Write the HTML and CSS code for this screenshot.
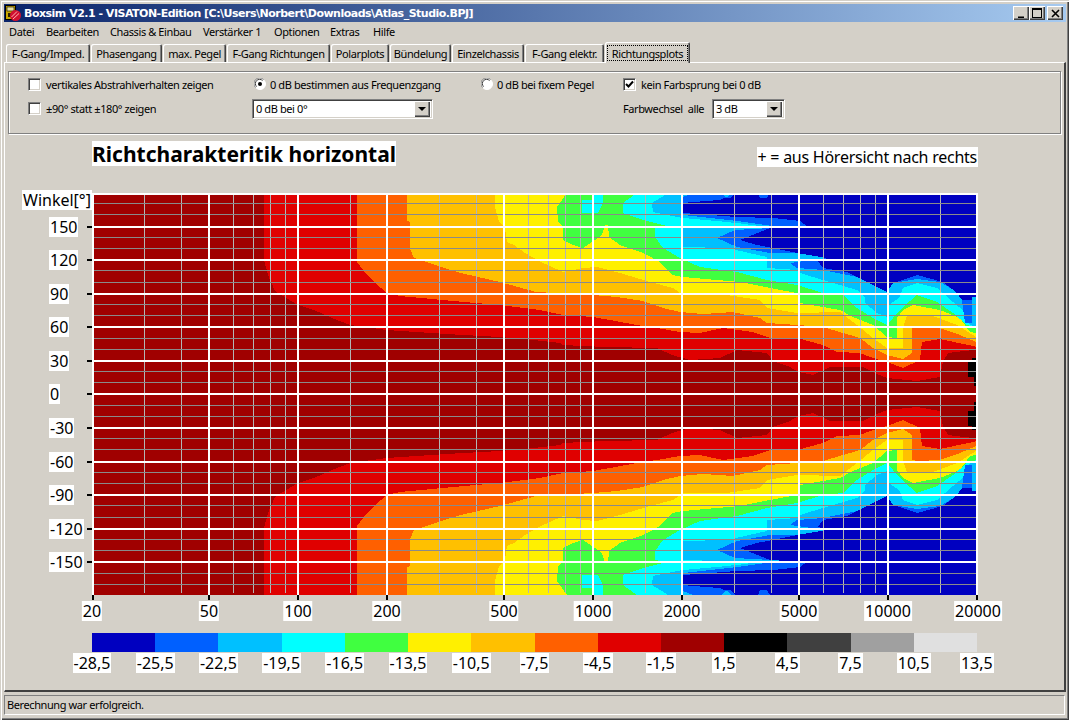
FILE: index.html
```html
<!DOCTYPE html>
<html lang="de">
<head>
<meta charset="utf-8">
<title>Boxsim V2.1</title>
<link rel="stylesheet" href="styles.css">
</head>
<body>
<div class="window">
  <header class="titlebar">
    <svg class="appicon" viewBox="0 0 16 16" width="16" height="16">
      <rect x="0.5" y="0.5" width="10" height="14" fill="#c8a800" stroke="#000"/>
      <rect x="2" y="2" width="7" height="4" fill="#e8e0a0" stroke="#000" stroke-width="0.6"/>
      <rect x="3" y="8" width="3" height="4" fill="#302000"/>
      <circle cx="10.5" cy="10.5" r="5.5" fill="#d01030"/>
      <path d="M6.5 12 12 6.5M8 14 14 8.5" stroke="#ffb0b0" stroke-width="1" fill="none"/>
    </svg>
    <span class="title-text">Boxsim V2.1 - VISATON-Edition [C:\Users\Norbert\Downloads\Atlas_Studio.BPJ]</span>
    <div class="capbtns">
      <span class="capbtn"><svg viewBox="0 0 9 9" width="9" height="9"><path d="M1 7.5h6v1.5H1z"/></svg></span>
      <span class="capbtn capbtn-mid"><svg viewBox="0 0 10 10" width="10" height="10"><path d="M0 0h10v10H0zM1 2v7h8V2z" fill-rule="evenodd"/></svg></span>
      <span class="capbtn capbtn-close"><svg viewBox="0 0 9 9" width="9" height="9"><path d="M1 1l7 7M8 1 1 8" stroke="#000" stroke-width="1.6" fill="none"/></svg></span>
    </div>
  </header>

  <nav class="menubar">
    <span>Datei</span><span>Bearbeiten</span><span>Chassis &amp; Einbau</span><span>Verstärker 1</span><span>Optionen</span><span>Extras</span><span>Hilfe</span>
  </nav>

  <div class="tabs">
    <span class="tab">F-Gang/Imped.</span>
    <span class="tab">Phasengang</span>
    <span class="tab">max. Pegel</span>
    <span class="tab">F-Gang Richtungen</span>
    <span class="tab">Polarplots</span>
    <span class="tab">Bündelung</span>
    <span class="tab">Einzelchassis</span>
    <span class="tab">F-Gang elektr.</span>
    <span class="tab tab-active"><span class="focus">Richtungsplots</span></span>
  </div>

  <main class="page">
    <section class="group">
      <label class="opt"><span class="check"></span>vertikales Abstrahlverhalten zeigen</label>
      <label class="opt"><svg class="radio" viewBox="0 0 12 12" width="12" height="12"><circle cx="6" cy="6" r="5.5" fill="#fff" stroke="#fff"/><path d="M1.6 9.6A5.5 5.5 0 0 1 9.6 1.6" fill="none" stroke="#808080"/><path d="M2.6 8.6A4.2 4.2 0 0 1 8.6 2.6" fill="none" stroke="#404040"/><circle cx="6" cy="6" r="2" fill="#000"/></svg>0 dB bestimmen aus Frequenzgang</label>
      <label class="opt"><svg class="radio" viewBox="0 0 12 12" width="12" height="12"><circle cx="6" cy="6" r="5.5" fill="#fff" stroke="#fff"/><path d="M1.6 9.6A5.5 5.5 0 0 1 9.6 1.6" fill="none" stroke="#808080"/><path d="M2.6 8.6A4.2 4.2 0 0 1 8.6 2.6" fill="none" stroke="#404040"/></svg>0 dB bei fixem Pegel</label>
      <label class="opt"><span class="check"><svg viewBox="0 0 9 9" width="9" height="9"><path d="M1 4l2.5 2.5L8 1.5" fill="none" stroke="#000" stroke-width="2"/></svg></span>kein Farbsprung bei 0 dB</label>

      <label class="opt"><span class="check"></span>±90° statt ±180° zeigen</label>
      <div class="combo combo-wide"><span class="combo-val">0 dB bei 0°</span><span class="combo-btn"><i></i></span></div>
      <span></span>
      <div class="farb"><span class="farb-label">Farbwechsel&nbsp; alle</span><div class="combo combo-small"><span class="combo-val">3 dB</span><span class="combo-btn"><i></i></span></div></div>
    </section>

    <section class="chart">
      <div class="chart-head">
        <h1 class="chart-title">Richtcharakteritik horizontal</h1>
        <span class="chart-note">+ = aus Hörersicht nach rechts</span>
      </div>
      <div class="plot">
        <svg class="heat" viewBox="92 193 885 402" width="885" height="402">
          <defs>
            <g id="half">
              <path class="c-red" d="M264 193L264 260 268 275 271 282 275 291 286 298 298 305 314 310 332 318 350 325 387 330 446 334 500 337 525 339 560 343 563 345 583 346 607 347 657 348 672 355 690 360 720 358 737 350 767 353 773 361 790 367 798 372 813 375 830 367 863 367 877 374 887 378 917 381 940 377 943 362 948 353 973 350 977 350 977 193Z"/>
              <path class="c-ora" d="M357 193L357 262 364 271 375 283 387 293 400 296 464 302 500 305 540 310 563 315 593 317 610 320 637 325 663 329 680 332 700 333 723 328 753 332 770 338 797 338 823 345 837 352 860 353 873 358 887 362 903 368 920 360 922 342 940 339 973 346 977 347 977 193Z"/>
              <path class="c-amb" d="M407 193L407 221 410 222 410 249 414 258 441 267 461 273 500 282 536 292 593 295 617 297 643 301 663 308 680 312 703 314 733 312 760 318 767 323 797 325 823 327 860 338 873 348 887 355 903 359 912 353 912 328 917 327 940 328 960 335 976 342 977 342 977 193Z"/>
              <path class="c-yel" d="M495 193L495 207 499 222 505 228 507 242 514 245 525 253 539 261 563 272 583 268 597 267 620 273 650 282 673 288 683 295 727 295 760 300 767 308 797 313 840 312 857 325 873 338 887 348 903 348 903 328 907 315 933 316 957 325 976 337 977 337 977 193Z"/>
              <path class="c-gre" d="M567 193L557 207 558 222 563 227 563 240 573 245 583 248 592 242 602 235 605 225 608 225 609 237 620 245 643 253 647 255 660 262 672 275 683 277 740 282 770 288 797 293 800 295 800 303 840 310 853 317 873 325 887 337 897 338 897 318 903 310 913 305 940 310 960 318 970 332 976 333 977 333 977 193Z"/>
              <path class="c-cya" d="M594 193L603 193 603 203 598 213 582 213 582 200 592 200Z"/>
              <path class="c-cya" d="M637 193L623 203 623 213 643 220 667 226 655 228 655 237 663 248 680 258 700 267 737 272 767 280 797 285 823 293 843 295 857 308 873 318 887 325 893 318 903 307 917 295 937 302 953 313 967 325 976 328 977 328 977 193Z"/>
              <path class="c-lbl" d="M668 193L662 197 652 203 653 212 677 217 683 218 727 222 760 226 683 228 683 247 727 248 767 257 767 268 797 270 800 273 823 280 857 290 865 297 865 303 877 313 887 317 889 305 900 297 903 288 917 283 937 288 953 302 965 312 970 325 976 327 977 327 977 193Z"/>
              <path class="c-cya" d="M683 222L737 223 760 226 683 226Z"/>
              <path class="c-blu" d="M693 193L683 197 683 215 737 221 773 226 807 226 735 230 717 238 737 247 770 253 797 253 827 258 790 263 797 268 823 270 857 277 887 292 893 283 917 279 940 282 957 292 962 300 965 323 972 323 972 297 977 297 977 193Z"/>
              <path class="c-nav" d="M735 193L720 200 693 202 683 203 683 213 737 217 773 218 800 221 807 226 770 228 740 240 757 245 797 253 827 258 818 261 823 268 847 272 887 292 893 283 917 275 943 282 957 293 962 300 972 300 972 297 977 297 977 193Z"/>
              <path class="c-blu" d="M719 193L735 193 730 198 722 198Z"/>
              <path class="c-lbl" d="M722 193L731 193 728 197 725 197Z"/>
              <path class="c-blu" d="M758 193L770 193 767 198 760 198Z"/>
              <path class="c-blk" d="M972 358L977 358 977 386 974 386 974 377 968 377 968 362 972 362Z"/>
            </g>
          </defs>
          <rect class="c-dar" x="92" y="193" width="885" height="402"/>
          <use href="#half"/>
          <use href="#half" transform="matrix(1 0 0 -1 0 788)"/>
          <path class="grid-v" d="M144.5 193V593M181.5 193V593M233.5 193V593M253.5 193V593M270.5 193V593M285.5 193V593M350.5 193V593M439.5 193V593M476.5 193V593M528.5 193V593M548.5 193V593M565.5 193V593M580.5 193V593M645.5 193V593M734.5 193V593M771.5 193V593M823.5 193V593M843.5 193V593M860.5 193V593M875.5 193V593M940.5 193V593"/>
          <path class="grid-h" d="M92 203.5H977M92 214.5H977M92 237.5H977M92 248.5H977M92 270.5H977M92 282.5H977M92 304.5H977M92 315.5H977M92 338.5H977M92 349.5H977M92 371.5H977M92 382.5H977M92 405.5H977M92 416.5H977M92 438.5H977M92 449.5H977M92 472.5H977M92 483.5H977M92 505.5H977M92 517.5H977M92 539.5H977M92 550.5H977M92 573.5H977M92 584.5H977"/>
          <path class="grid-w" d="M92 194H978M92 227H978M92 260H978M92 294H978M92 327H978M92 361H978M92 394H978M92 428H978M92 462H978M92 495H978M92 529H978M92 562H978M209 193V595M298 193V595M387 193V595M504 193V595M593 193V595M682 193V595M799 193V595M888 193V595M92.5 193V595M977 193V595"/>
          <path class="tick" d="M87 227H92M87 260H92M87 294H92M87 327H92M87 361H92M87 394H92M87 428H92M87 462H92M87 495H92M87 529H92M87 562H92M92.5 595V600M209 595V600M298 595V600M387 595V600M504 595V600M593 595V600M682 595V600M799 595V600M888 595V600M977 595V600"/>
        </svg>
        <span class="lab lab-y lab-head">Winkel[°]</span>
        <span class="lab lab-y" style="top:24px">150</span>
        <span class="lab lab-y" style="top:57px">120</span>
        <span class="lab lab-y" style="top:91px">90</span>
        <span class="lab lab-y" style="top:124px">60</span>
        <span class="lab lab-y" style="top:158px">30</span>
        <span class="lab lab-y" style="top:191px">0</span>
        <span class="lab lab-y" style="top:225px">-30</span>
        <span class="lab lab-y" style="top:259px">-60</span>
        <span class="lab lab-y" style="top:292px">-90</span>
        <span class="lab lab-y" style="top:326px">-120</span>
        <span class="lab lab-y" style="top:359px">-150</span>
        <span class="lab lab-x" style="left:0">20</span>
        <span class="lab lab-x" style="left:117px">50</span>
        <span class="lab lab-x" style="left:206px">100</span>
        <span class="lab lab-x" style="left:295px">200</span>
        <span class="lab lab-x" style="left:412px">500</span>
        <span class="lab lab-x" style="left:501px">1000</span>
        <span class="lab lab-x" style="left:590px">2000</span>
        <span class="lab lab-x" style="left:707px">5000</span>
        <span class="lab lab-x" style="left:796px">10000</span>
        <span class="lab lab-x" style="left:886px">20000</span>
      </div>
      <div class="legend">
        <i class="c1"></i><i class="c2"></i><i class="c3"></i><i class="c4"></i><i class="c5"></i><i class="c6"></i><i class="c7"></i><i class="c8"></i><i class="c9"></i><i class="c10"></i><i class="c11"></i><i class="c12"></i><i class="c13"></i><i class="c14"></i>
      </div>
      <div class="legend-labels">
        <span><b>-28,5</b></span><span><b>-25,5</b></span><span><b>-22,5</b></span><span><b>-19,5</b></span><span><b>-16,5</b></span><span><b>-13,5</b></span><span><b>-10,5</b></span><span><b>-7,5</b></span><span><b>-4,5</b></span><span><b>-1,5</b></span><span><b>1,5</b></span><span><b>4,5</b></span><span><b>7,5</b></span><span><b>10,5</b></span><span><b>13,5</b></span>
      </div>
    </section>
  </main>

  <footer class="status">Berechnung war erfolgreich.</footer>
</div>
</body>
</html>
```
FILE: styles.css
```css
* { box-sizing: border-box; }
html, body { margin: 0; padding: 0; }
body {
  width: 1069px;
  height: 720px;
  overflow: hidden;
  background: #d4d0c8;
  font-family: "Noto Sans", "DejaVu Sans", sans-serif;
  font-size: 11px;
  letter-spacing: -0.4px;
  color: #000;
}
.window {
  width: 1069px;
  height: 720px;
  padding: 4px 3px 3px 4px;
  display: flex;
  flex-direction: column;
  box-shadow: inset 1px 1px 0 #d4d0c8, inset 2px 2px 0 #fff, inset -1px -1px 0 #404040, inset -2px -2px 0 #808080;
}
.titlebar {
  height: 18px;
  flex: none;
  display: flex;
  align-items: center;
  padding: 0 3px 0 1px;
  background: linear-gradient(to right, #0a246a, #a6caf0);
  color: #fff;
  font-family: "DejaVu Sans", sans-serif;
  font-weight: bold;
  font-size: 11px;
}
.appicon { flex: none; margin-right: 3px; }
.title-text { white-space: nowrap; letter-spacing: -0.5px; }
.capbtns { margin-left: auto; display: flex; }
.capbtn {
  width: 16px;
  height: 14px;
  display: flex;
  align-items: center;
  justify-content: center;
  background: #d4d0c8;
  box-shadow: inset 1px 1px 0 #fff, inset -1px -1px 0 #404040, inset -2px -2px 0 #808080;
}
.capbtn-close { margin-left: 2px; }
.menubar {
  height: 18px;
  margin-bottom: 2px;
  flex: none;
  display: grid;
  grid-template-columns: 37px 64px 93px 71px 56px 43px auto;
  padding-left: 5px;
  align-items: center;
  white-space: nowrap;
  color: #000;
}
.tabs {
  height: 20px;
  flex: none;
  display: grid;
  grid-template-columns: 85px 72px 64px 104px 59px 62px 73px 80px 85px;
  justify-content: start;
  padding-left: 2px;
  position: relative;
  z-index: 1;
  align-items: end;
}
.tab {
  height: 18px;
  margin-right: 1px;
  display: flex;
  align-items: center;
  justify-content: center;
  white-space: nowrap;
  background: #d4d0c8;
  border-radius: 2px 2px 0 0;
  box-shadow: inset 1px 1px 0 #fff, inset -1px 0 0 #404040, inset -2px 0 0 #808080;
}
.tab-active {
  height: 21px;
  margin-right: 0;
  margin-bottom: -1px;
  padding: 3px 2px 2px 2px;
}
.focus {
  width: 100%;
  height: 100%;
  border: 1px dotted #000;
  display: flex;
  align-items: center;
  justify-content: center;
}
.page {
  flex: 1;
  border-style: solid;
  border-width: 1px 2px 2px 1px;
  border-color: #fff #404040 #404040 #fff;
  padding: 8px 3px 0 3px;
  min-height: 0;
}
.group {
  height: 63px;
  border: 1px solid #808080;
  box-shadow: 1px 1px 0 #fff, inset 1px 1px 0 #fff;
  padding: 0 0 0 19px;
  display: grid;
  grid-template-columns: 224px 227px 144px auto;
  grid-template-rows: 24px 25px;
  align-content: start;
  align-items: center;
}
.opt { display: flex; align-items: center; white-space: nowrap; }
.check {
  width: 13px;
  height: 13px;
  margin-right: 5px;
  flex: none;
  display: flex;
  align-items: center;
  justify-content: center;
  background: #fff;
  border: 1px solid;
  border-color: #808080 #fff #fff #808080;
  box-shadow: inset 1px 1px 0 #404040, inset -1px -1px 0 #d4d0c8;
}
.radio { flex: none; margin: 0 4px 0 2px; }
.combo {
  height: 20px;
  display: flex;
  align-items: center;
  background: #fff;
  border: 1px solid;
  border-color: #808080 #fff #fff #808080;
  box-shadow: inset 1px 1px 0 #404040, inset -1px -1px 0 #d4d0c8;
  padding: 2px;
}
.combo-wide { width: 181px; }
.combo-small { width: 73px; }
.combo-val { flex: 1; padding-left: 1px; white-space: nowrap; }
.combo-btn {
  width: 16px;
  height: 16px;
  flex: none;
  display: flex;
  align-items: center;
  justify-content: center;
  background: #d4d0c8;
  box-shadow: inset 1px 1px 0 #fff, inset -1px -1px 0 #404040, inset -2px -2px 0 #808080;
}
.combo-btn i {
  width: 0;
  height: 0;
  border-left: 4px solid transparent;
  border-right: 4px solid transparent;
  border-top: 4px solid #000;
}
.farb { display: flex; align-items: center; }
.farb-label { width: 89px; white-space: nowrap; }
.chart { padding-left: 84px; letter-spacing: 0; }
.chart-head {
  width: 886px;
  height: 59px;
  display: flex;
  justify-content: space-between;
  align-items: flex-start;
  padding-top: 7px;
}
.chart-title {
  margin: 0;
  height: 25px;
  line-height: 27px;
  background: #fff;
  font-size: 21px;
  font-weight: bold;
  white-space: nowrap;
}
.chart-note, .lab, .legend-labels b {
  background: #fff;
  font-size: 16px;
  font-weight: normal;
  line-height: 20px;
  height: 20px;
  white-space: nowrap;
}
.chart-note { margin-top: 6px; padding: 0 1px; letter-spacing: -0.25px; }
.plot {
  position: relative;
  width: 885px;
  height: 402px;
  margin-bottom: 38px;
}
.heat { display: block; overflow: visible; }
.heat path, .heat rect { shape-rendering: crispEdges; }
.c-dar { fill: #a00000; }
.c-red { fill: #e00000; }
.c-ora { fill: #ff6000; }
.c-amb { fill: #ffc000; }
.c-yel { fill: #fff000; }
.c-gre { fill: #40ff40; }
.c-cya { fill: #00ffff; }
.c-lbl { fill: #00c0ff; }
.c-blu { fill: #0060ff; }
.c-nav { fill: #0000c0; }
.c-blk { fill: #000; }
.grid-v { stroke: #b4b4b4; stroke-width: 1; fill: none; }
.grid-h { stroke: #8a8a8a; stroke-width: 1; fill: none; }
.grid-w { stroke: #fff; stroke-width: 2; fill: none; }
.tick { stroke: #000; stroke-width: 2; fill: none; }
.lab { position: absolute; padding: 0 1px; }
.lab-y { left: -43px; }
.lab-head { left: -70px; top: -3px; }
.lab-x { top: 408px; transform: translateX(-50%); }
.legend {
  width: 885px;
  height: 19px;
  display: flex;
}
.legend i { flex: 1; }
.c1 { background: #0000c0; }
.c2 { background: #0060ff; }
.c3 { background: #00c0ff; }
.c4 { background: #00ffff; }
.c5 { background: #40ff40; }
.c6 { background: #fff000; }
.c7 { background: #ffc000; }
.c8 { background: #ff6000; }
.c9 { background: #e00000; }
.c10 { background: #a00000; }
.c11 { background: #000; }
.c12 { background: #404040; }
.c13 { background: #a0a0a0; }
.c14 { background: #e0e0e0; }
.legend-labels {
  display: grid;
  grid-template-columns: repeat(15, 63.21px);
  margin-left: -31.6px;
  margin-top: 1px;
  text-align: center;
}
.legend-labels span { display: block; }
.legend-labels b { display: inline-block; padding: 0 1px; }
.status {
  height: 20px;
  flex: none;
  margin: 3px 1px 2px 0;
  line-height: 18px;
  padding-left: 2px;
  border: 1px solid;
  border-color: #808080 #fff #fff #808080;
  white-space: nowrap;
}
```
